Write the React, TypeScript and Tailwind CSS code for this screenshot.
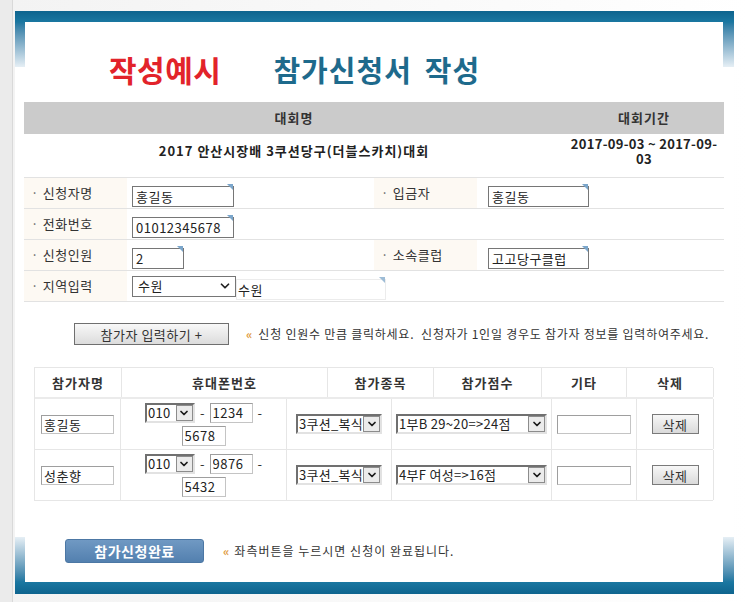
import { ChevronDown } from 'lucide-react';

const FONT = "font-['Noto_Sans_CJK_KR',sans-serif]";

function FormInput({ value, className }: { value: string; className: string }) {
  return (
    <div className={`relative h-[21px] ${className}`}>
      <input
        defaultValue={value}
        className="h-full w-full border border-[#767676] bg-white px-[3px] text-[13px] leading-none tracking-[0.5px] text-[#222] outline-none"
      />
      {/* IE autocomplete corner mark */}
      <span className="absolute right-px top-px h-0 w-0 border-l-[6px] border-t-[6px] border-l-transparent border-t-[#7ba6cb]" />
    </div>
  );
}

function BoxSelect({ value, className }: { value: string; className: string }) {
  return (
    <div
      className={`flex h-[20px] items-stretch border-2 border-b-[#e2e2e2] border-l-[#707070] border-r-[#e2e2e2] border-t-[#707070] bg-white ${className}`}
    >
      <select
        defaultValue={value}
        className="h-full min-w-0 flex-1 appearance-none bg-transparent pl-[1px] text-[13px] leading-[16px] tracking-[0.3px] text-[#222] outline-none"
      >
        <option>{value}</option>
      </select>
      <span className="flex w-[17px] shrink-0 items-center justify-center border border-[#8c8c8c] bg-[#ebebeb]">
        <ChevronDown className="h-3 w-3 text-[#1a1a1a]" strokeWidth={3.5} />
      </span>
    </div>
  );
}

function CellInput({ value, className }: { value: string; className: string }) {
  return (
    <input
      defaultValue={value}
      className={`border border-[#c4c4c4] border-l-[#9e9e9e] border-t-[#9e9e9e] bg-white px-[2px] text-[13px] leading-none tracking-[0.5px] text-[#222] outline-none ${className}`}
    />
  );
}

function Label({ text }: { text: string }) {
  return (
    <div className="flex w-[103px] shrink-0 items-center bg-[#fdf9f3] pl-[7px] text-[13px] tracking-[0.5px] text-[#333]">
      <span className="mr-[4px] text-[#666]">·</span>
      {text}
    </div>
  );
}

const participants = [
  { name: '홍길동', mid: '1234', last: '5678', grade: '1부B 29~20=>24점' },
  { name: '성춘향', mid: '9876', last: '5432', grade: '4부F 여성=>16점' },
];

export default function App() {
  return (
    <div className={`flex h-[602px] w-[749px] overflow-hidden bg-white ${FONT}`}>
      <div className="w-[13px] shrink-0 border-r border-[#d9d9d9] bg-[#ebebeb]" />
      <div className="flex-1 bg-linear-to-r from-[#f3f3f3] to-white pl-[2px] pt-[11px]">
        <div className="w-[719px]">
          <div className="h-[11px] bg-linear-to-b from-[#0e648e] to-[#1a77a1]" />

          <div className="relative h-[560px] bg-white">
            {/* frame side fades */}
            <span className="absolute left-0 top-0 h-[45px] w-[10px] bg-linear-to-b from-[#1a76a0] to-[#e6eff5]" />
            <span className="absolute right-0 top-0 h-[45px] w-[11px] bg-linear-to-b from-[#1a76a0] to-[#e6eff5]" />
            <span className="absolute bottom-0 left-0 h-[45px] w-[10px] bg-linear-to-b from-[#e6eff5] to-[#1a76a0]" />
            <span className="absolute bottom-0 right-0 h-[45px] w-[11px] bg-linear-to-b from-[#e6eff5] to-[#1a76a0]" />

            <div className="relative ml-[9px] w-[700px]">
              {/* title */}
              <div className="flex h-[80px] items-start pl-[85px] pt-[32px] font-bold leading-[30px]">
                <span className="text-[30px] tracking-[0.5px] text-[#e2232a]">작성예시</span>
                <span className="ml-[52px] text-[29px] tracking-[1px] text-[#1e6a8c]">참가신청서</span>
                <span className="ml-[13px] text-[29px] tracking-[1px] text-[#1e6a8c]">작성</span>
              </div>

              {/* tournament info */}
              <div className="grid h-[32px] grid-cols-[540px_160px] items-center bg-[#cbcbcb] text-center text-[13px] font-bold tracking-[1px] text-[#333]">
                <span>대회명</span>
                <span>대회기간</span>
              </div>
              <div className="grid h-[44px] grid-cols-[540px_160px] items-center border-b border-[#e2e2e2] pb-[10px] text-center text-[13px] font-bold leading-[15px] text-[#222]">
                <span className="tracking-[1px]">2017 안산시장배 3쿠션당구(더블스카치)대회</span>
                <span className="tracking-[0.3px]">
                  2017-09-03 ~ 2017-09-
                  <br />
                  03
                </span>
              </div>

              {/* applicant form */}
              <div className="flex h-[31px] border-b border-[#e2e2e2]">
                <Label text="신청자명" />
                <div className="flex w-[247px] items-center pl-[5px]">
                  <FormInput value="홍길동" className="w-[102px]" />
                </div>
                <Label text="입금자" />
                <div className="flex flex-1 items-center pl-[11px]">
                  <FormInput value="홍길동" className="w-[101px]" />
                </div>
              </div>
              <div className="flex h-[31px] border-b border-[#e2e2e2]">
                <Label text="전화번호" />
                <div className="flex flex-1 items-center pl-[5px]">
                  <FormInput value="01012345678" className="w-[102px]" />
                </div>
              </div>
              <div className="flex h-[31px] border-b border-[#e2e2e2]">
                <Label text="신청인원" />
                <div className="flex w-[247px] items-center pl-[5px]">
                  <FormInput value="2" className="w-[52px]" />
                </div>
                <Label text="소속클럽" />
                <div className="flex flex-1 items-center pl-[11px]">
                  <FormInput value="고고당구클럽" className="w-[101px]" />
                </div>
              </div>
              <div className="flex h-[31px] border-b border-[#e2e2e2]">
                <Label text="지역입력" />
                <div className="flex flex-1 items-center pl-[5px]">
                  <div className="flex h-[21px] w-[104px] items-center border border-[#767676] bg-white pr-[3px]">
                    <select
                      defaultValue="수원"
                      className="h-full min-w-0 flex-1 appearance-none bg-transparent pl-[5px] text-[13px] leading-[16px] tracking-[0.5px] text-[#222] outline-none"
                    >
                      <option>수원</option>
                    </select>
                    <ChevronDown className="h-[14px] w-[14px] text-[#222]" strokeWidth={3} />
                  </div>
                  <div className="relative h-[21px] w-[150px]">
                    <input
                      defaultValue="수원"
                      className="h-full w-full border border-[#ececec] bg-white px-[1px] text-[13px] leading-none tracking-[0.5px] text-[#222] outline-none"
                    />
                    <span className="absolute right-px top-px h-0 w-0 border-l-[6px] border-t-[6px] border-l-transparent border-t-[#9dbcd6]" />
                  </div>
                </div>
              </div>

              {/* add participant */}
              <div className="mt-[21px] flex h-[22px] items-center">
                <button className="ml-[50px] h-[22px] w-[155px] border border-[#6f6f6f] bg-linear-to-b from-[#f8f8f8] to-[#dcdcdc] text-[13px] leading-none tracking-[0.5px] text-[#333]">
                  참가자 입력하기 +
                </button>
                <span className="ml-[17px] text-[12px] font-bold leading-none text-[#e09a3c]">«</span>
                <span className="ml-[6px] text-[12px] tracking-[0.75px] text-[#333]">
                  신청 인원수 만큼 클릭하세요.&nbsp;&nbsp;신청자가 1인일 경우도 참가자 정보를 입력하여주세요.
                </span>
              </div>

              {/* participants table */}
              <div className="ml-[10px] mt-[22px] w-[679px] border-l border-t border-[#e6e6e6]">
                <div className="grid h-[31px] grid-cols-[87px_206px_106px_108px_85px_87px] border-b-2 border-[#ebebeb] text-[13px] font-bold tracking-[1px] text-[#333]">
                  {['참가자명', '휴대폰번호', '참가종목', '참가점수', '기타', '삭제'].map((h) => (
                    <div key={h} className="flex items-center justify-center border-r border-[#e6e6e6]">
                      {h}
                    </div>
                  ))}
                </div>
                {participants.map((p) => (
                  <div
                    key={p.name}
                    className="grid h-[51px] grid-cols-[86px_166px_105px_160px_85px_77px] border-b border-[#e6e6e6]"
                  >
                    <div className="flex items-center justify-center border-r border-[#e6e6e6]">
                      <CellInput value={p.name} className="h-[19px] w-[73px]" />
                    </div>
                    <div className="flex flex-col items-center justify-center gap-[3px] border-r border-[#e6e6e6] text-[13px] text-[#333]">
                      <div className="flex items-center">
                        <BoxSelect value="010" className="w-[50px]" />
                        <span className="mx-[5px]">-</span>
                        <CellInput value={p.mid} className="h-[20px] w-[43px]" />
                        <span className="ml-[5px]">-</span>
                      </div>
                      <CellInput value={p.last} className="h-[20px] w-[44px]" />
                    </div>
                    <div className="flex items-center justify-center border-r border-[#e6e6e6]">
                      <BoxSelect value="3쿠션_복식" className="w-[86px]" />
                    </div>
                    <div className="flex items-center justify-center border-r border-[#e6e6e6]">
                      <BoxSelect value={p.grade} className="w-[151px]" />
                    </div>
                    <div className="flex items-center justify-center border-r border-[#e6e6e6]">
                      <CellInput value="" className="h-[19px] w-[74px]" />
                    </div>
                    <div className="flex items-center justify-center border-r border-[#e6e6e6]">
                      <button className="h-[20px] w-[47px] border border-[#7a7a7a] bg-linear-to-b from-[#f7f7f7] to-[#dadada] text-[13px] leading-none tracking-[0.5px] text-[#333]">
                        삭제
                      </button>
                    </div>
                  </div>
                ))}
              </div>

              {/* submit */}
              <div className="mt-[38px] flex h-[24px] items-center">
                <button className="ml-[41px] h-[24px] w-[139px] rounded-[3px] border border-[#4c77a4] bg-linear-to-b from-[#7099c3] to-[#5380af] text-[14px] font-bold leading-none tracking-[0.5px] text-white">
                  참가신청완료
                </button>
                <span className="ml-[19px] text-[12px] font-bold leading-none text-[#e09a3c]">«</span>
                <span className="ml-[5px] text-[12px] tracking-[1px] text-[#333]">좌측버튼을 누르시면 신청이 완료됩니다.</span>
              </div>
            </div>
          </div>

          <div className="h-[12px] bg-linear-to-b from-[#1a77a1] to-[#0e648e]" />
        </div>
      </div>
    </div>
  );
}
